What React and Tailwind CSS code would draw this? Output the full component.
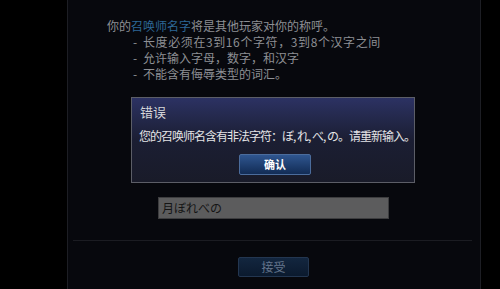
export default function App() {
  const cjk = { fontFamily: '"Noto Sans CJK SC", "Noto Sans", sans-serif' };

  return (
    <div className="w-[500px] h-[289px] bg-black overflow-hidden" style={cjk}>
      <div className="ml-[67px] w-[414px] h-full bg-[#07080d] border-x border-[#1d1e24] flex flex-col">
        {/* intro text */}
        <div className="pl-[39px] pt-[18px] text-[12px] leading-[16px] text-[#8d8f94] whitespace-nowrap">
          <p>
            你的<span className="text-[#2d6796]">召唤师名字</span>将是其他玩家对你的称呼。
          </p>
          <ul className="pl-[26px]">
            <li className="flex">
              <span className="w-[10px]">-</span>
              <span className="tracking-[0.6px]">长度必须在3到16个字符，3到8个汉字之间</span>
            </li>
            <li className="flex">
              <span className="w-[10px]">-</span>
              <span>允许输入字母，数字，和汉字</span>
            </li>
            <li className="flex">
              <span className="w-[10px]">-</span>
              <span>不能含有侮辱类型的词汇。</span>
            </li>
          </ul>
        </div>

        {/* error dialog */}
        <div className="ml-[63px] mt-[15px] w-[284px] h-[86px] border border-[#5c5e67] bg-gradient-to-b from-[#2c3263] via-[#1b1e33] to-[#191b29] flex flex-col">
          <div className="pl-[8px] pt-[5px] text-[13px] leading-[18px] text-[#d6d7da]">错误</div>
          <div className="pl-[7px] mt-[7px] text-[12px] leading-[16px] text-[#e4e4e6] whitespace-nowrap tracking-[-1px]">
            您的召唤师名含有非法字符：ぼ, れ, べ, の。请重新输入。
          </div>
          <div className="flex justify-center mt-[10px] pl-[4px]">
            <button className="w-[72px] h-[21px] rounded-[2px] border border-[#4b6c9c] bg-gradient-to-b from-[#2f5690] to-[#122c55] text-[11px] font-semibold text-white">
              确认
            </button>
          </div>
        </div>

        {/* name input */}
        <div className="ml-[90px] mt-[14px] w-[231px] h-[22px] bg-[#5c5c5d] border border-[#3d3d3f] text-[12px] leading-[20px] pl-[3px] text-[#151515]">
          月ぼれべの
        </div>

        {/* divider */}
        <div className="ml-[5px] mr-[8px] mt-[21px] h-px bg-[#1b1c22]"></div>

        {/* accept */}
        <div className="flex mt-[16px] pl-[170px]">
          <button className="w-[71px] h-[20px] rounded-[2px] border border-[#233650] bg-gradient-to-b from-[#13263f] to-[#0b1a2e] text-[12px] text-[#66768d]">
            接受
          </button>
        </div>
      </div>
    </div>
  );
}
